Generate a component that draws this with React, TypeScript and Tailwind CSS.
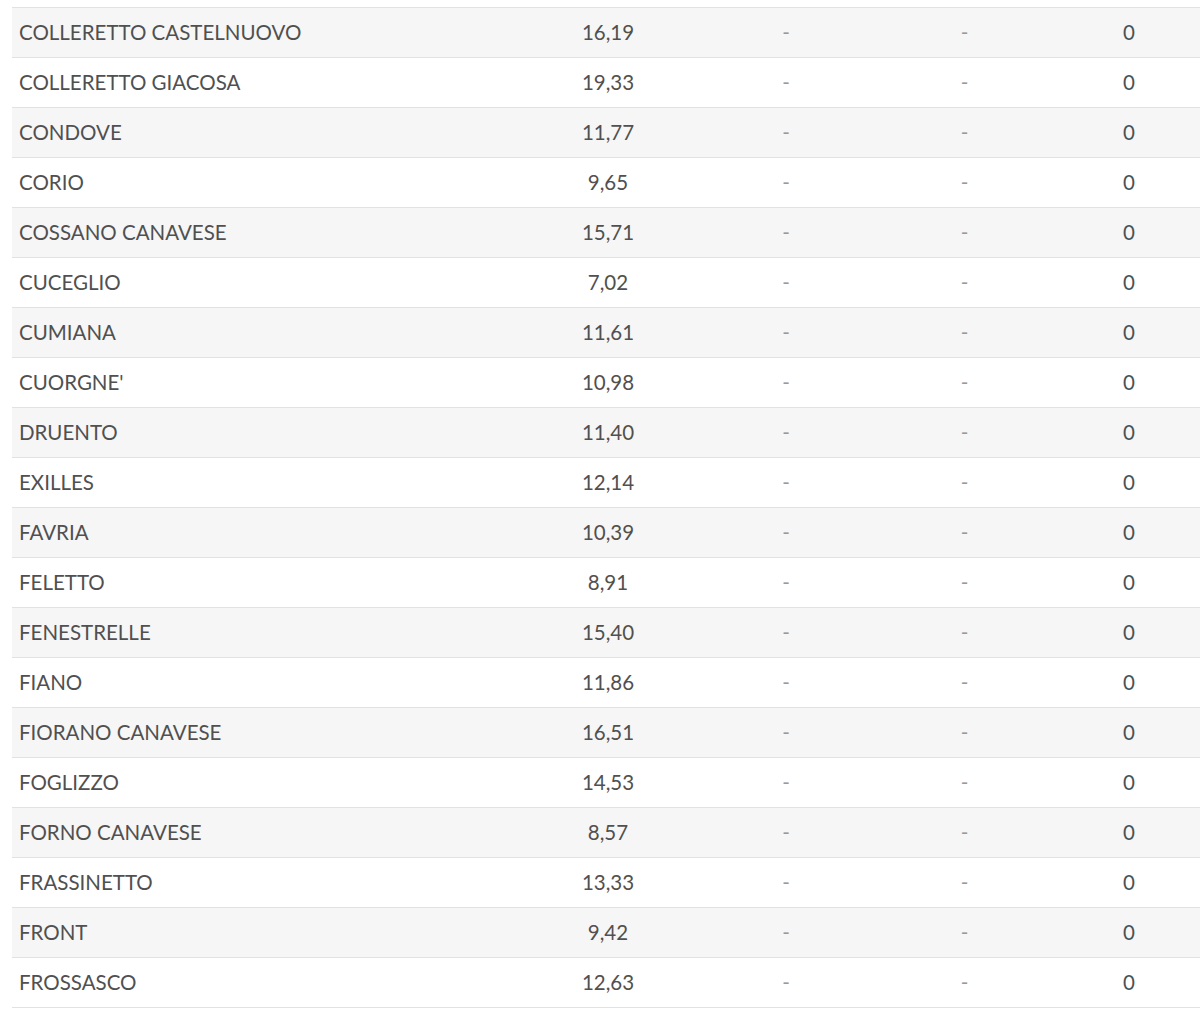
import React from 'react'

const rows: [string, string][] = [
  ['COLLERETTO CASTELNUOVO', '16,19'],
  ['COLLERETTO GIACOSA', '19,33'],
  ['CONDOVE', '11,77'],
  ['CORIO', '9,65'],
  ['COSSANO CANAVESE', '15,71'],
  ['CUCEGLIO', '7,02'],
  ['CUMIANA', '11,61'],
  ["CUORGNE'", '10,98'],
  ['DRUENTO', '11,40'],
  ['EXILLES', '12,14'],
  ['FAVRIA', '10,39'],
  ['FELETTO', '8,91'],
  ['FENESTRELLE', '15,40'],
  ['FIANO', '11,86'],
  ['FIORANO CANAVESE', '16,51'],
  ['FOGLIZZO', '14,53'],
  ['FORNO CANAVESE', '8,57'],
  ['FRASSINETTO', '13,33'],
  ['FRONT', '9,42'],
  ['FROSSASCO', '12,63'],
]

export default function App() {
  return (
    <div className="w-[1200px] h-[1012px] overflow-hidden bg-white pt-[7px] pl-[12px] text-[#505050] text-[20.5px]" style={{ fontFamily: 'Lato, "Open Sans", sans-serif' }}>
      <div className="w-[1192px] border-t border-[#e2e2e2]">
        {rows.map(([name, val], i) => (
          <div
            key={name}
            className={`grid grid-cols-[507px_178px_178px_179px_150px] h-[50px] items-center border-b border-[#e2e2e2] ${i % 2 === 0 ? 'bg-[#f6f6f6]' : 'bg-white'}`}
          >
            <div className="pl-[7px]">{name}</div>
            <div className="text-center">{val}</div>
            <div className="text-center text-[#9a9a9a]">-</div>
            <div className="text-center text-[#9a9a9a]">-</div>
            <div className="text-center">0</div>
          </div>
        ))}
      </div>
    </div>
  )
}
